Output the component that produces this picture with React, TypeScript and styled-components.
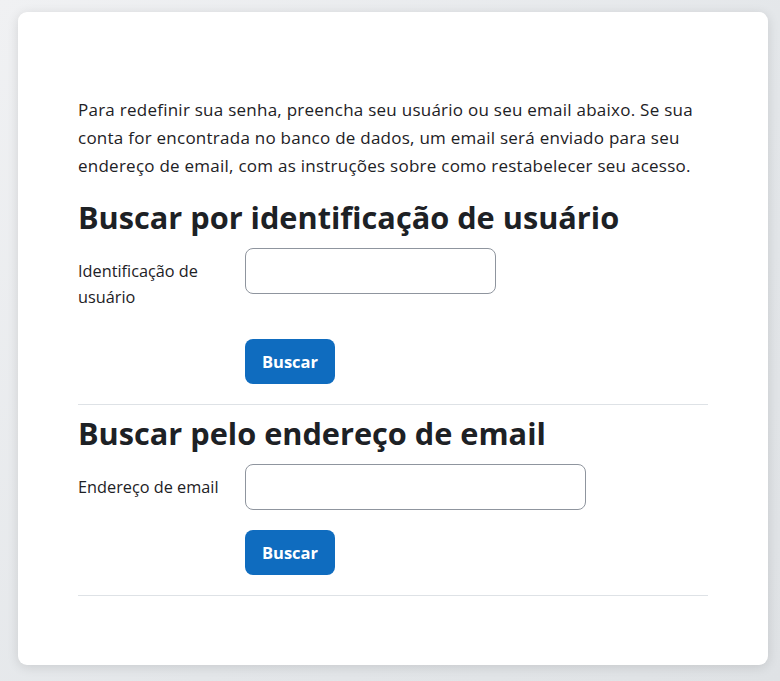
import React from 'react';
import styled, { createGlobalStyle } from 'styled-components';

const GlobalStyle = createGlobalStyle`
  html, body {
    margin: 0;
    padding: 0;
  }
  body {
    background: linear-gradient(135deg, #f0f1f3 0%, #e3e6e9 60%, #dfe2e5 100%);
    min-height: 100vh;
    font-family: "Open Sans", "Noto Sans", sans-serif;
    color: #1d2125;
  }
`;

const Page = styled.div`
  padding: 12px 12px 16px 18px;
  box-sizing: border-box;
`;

const Card = styled.div`
  width: 750px;
  height: 653px;
  box-sizing: border-box;
  background: #fff;
  border-radius: 9px;
  box-shadow: 0 2px 12px rgba(0, 0, 0, 0.12);
  padding: 84px 60px 0 60px;
`;

const Intro = styled.p`
  margin: 0 0 16px;
  font-size: 17px;
  line-height: 28px;
  letter-spacing: 0.25px;
`;

const Section = styled.form`
  border-bottom: 1px solid #dee2e6;
  padding-bottom: 20px;
  & + & {
    padding-top: 7px;
  }
`;

const Heading = styled.h3`
  margin: 0 0 10px;
  font-size: 30.7px;
  line-height: 42px;
  font-weight: 700;
`;

const Row = styled.div<{ $gap: number }>`
  display: flex;
  align-items: flex-start;
  margin-bottom: ${(p) => p.$gap}px;
`;

const Label = styled.label`
  width: 167px;
  flex: none;
  font-size: 16.3px;
  line-height: 26px;
  padding-top: 10px;
  box-sizing: border-box;
  padding-right: 20px;
`;

const Input = styled.input<{ $w: number }>`
  width: ${(p) => p.$w}px;
  height: 46px;
  box-sizing: border-box;
  border: 1px solid #8f959e;
  border-radius: 8px;
  padding: 6px 12px;
  font: inherit;
  outline: none;
`;

const Button = styled.button`
  margin-left: 167px;
  height: 45px;
  width: 90px;
  border: none;
  border-radius: 8px;
  background: #0f6cbf;
  color: #fff;
  font-family: inherit;
  font-weight: 700;
  font-size: 16.5px;
  cursor: pointer;
`;

export default function App() {
  return (
    <>
      <GlobalStyle />
      <Page>
        <Card>
          <Intro>
            Para redefinir sua senha, preencha seu usuário ou seu email abaixo. Se sua conta for
            encontrada no banco de dados, um email será enviado para seu endereço de email, com as
            instruções sobre como restabelecer seu acesso.
          </Intro>
          <Section>
            <Heading>Buscar por identificação de usuário</Heading>
            <Row $gap={29}>
              <Label htmlFor="username">Identificação de usuário</Label>
              <Input id="username" type="text" $w={251} />
            </Row>
            <Row $gap={0}>
              <Button type="button">Buscar</Button>
            </Row>
          </Section>
          <Section>
            <Heading>Buscar pelo endereço de email</Heading>
            <Row $gap={20}>
              <Label htmlFor="email">Endereço de email</Label>
              <Input id="email" type="text" $w={341} />
            </Row>
            <Row $gap={0}>
              <Button type="button">Buscar</Button>
            </Row>
          </Section>
        </Card>
      </Page>
    </>
  );
}
